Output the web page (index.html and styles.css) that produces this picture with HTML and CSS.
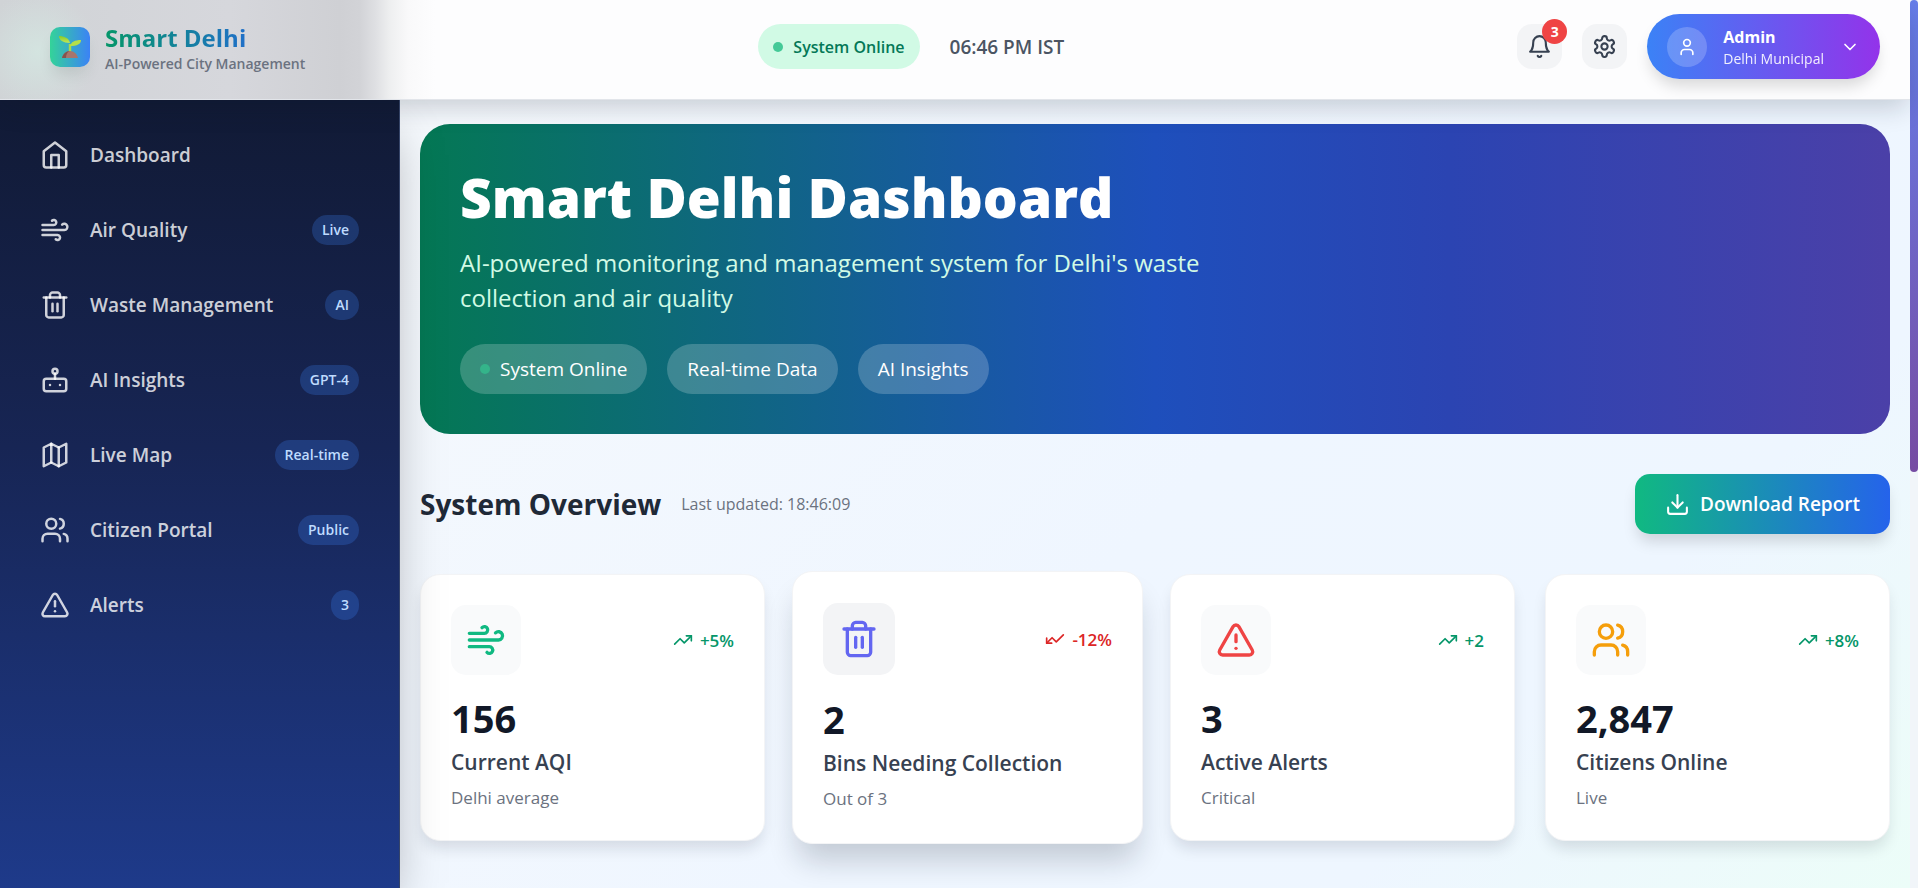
FILE: index.html
```html
<!DOCTYPE html>
<html lang="en">
<head>
    <meta charset="UTF-8">
    <meta name="viewport" content="width=device-width, initial-scale=1.0">
    <title>Smart Delhi Dashboard</title>
    <link rel="stylesheet" href="styles.css">
</head>
<body>
    <div class="app">
        <header class="topbar">
            <a href="#" class="brand">
                <span class="brand-icon">
                    <svg width="24" height="24" viewBox="0 0 24 24">
                        <defs>
                            <linearGradient id="leaf" x1="0" y1="0" x2="0" y2="1">
                                <stop offset="0" stop-color="#8bc926"/>
                                <stop offset="1" stop-color="#c0e85a"/>
                            </linearGradient>
                        </defs>
                        <path d="M12 17V9" stroke="#a9d94a" stroke-width="2.4" fill="none"/>
                        <path d="M12 8C11 3 6 1 1 1c0 4 4 7 11 7z" fill="url(#leaf)"/>
                        <path d="M12 11c1-4 5-6 11-6 0 4-4 6-11 6z" fill="#b4e04a"/>
                        <path d="M4 23c1-4 4-7 8-7s7 3 8 7z" fill="#a8756c"/>
                        <path d="M4 23c1-4 4-7 8-7-3 1-4 4-4 7z" fill="#84544d"/>
                    </svg>
                </span>
                <span class="brand-text">
                    <span class="brand-name">Smart Delhi</span>
                    <span class="brand-tag">AI-Powered City Management</span>
                </span>
            </a>
            <div class="status">
                <span class="status-pill"><span class="dot"></span>System Online</span>
                <time class="clock">06:46 PM IST</time>
            </div>
            <div class="actions">
                <button class="icon-btn" type="button" aria-label="Notifications">
                    <svg class="icon" width="25" height="25" viewBox="0 0 24 24"><path d="M6 8a6 6 0 0 1 12 0c0 7 3 9 3 9H3s3-2 3-9"/><path d="M10.3 21a1.94 1.94 0 0 0 3.4 0"/></svg>
                    <span class="count">3</span>
                </button>
                <button class="icon-btn" type="button" aria-label="Settings">
                    <svg class="icon" width="25" height="25" viewBox="0 0 24 24"><path d="M12.22 2h-.44a2 2 0 0 0-2 2v.18a2 2 0 0 1-1 1.73l-.43.25a2 2 0 0 1-2 0l-.15-.08a2 2 0 0 0-2.73.73l-.22.38a2 2 0 0 0 .73 2.73l.15.1a2 2 0 0 1 1 1.72v.51a2 2 0 0 1-1 1.74l-.15.09a2 2 0 0 0-.73 2.73l.22.38a2 2 0 0 0 2.73.73l.15-.08a2 2 0 0 1 2 0l.43.25a2 2 0 0 1 1 1.73V20a2 2 0 0 0 2 2h.44a2 2 0 0 0 2-2v-.18a2 2 0 0 1 1-1.73l.43-.25a2 2 0 0 1 2 0l.15.08a2 2 0 0 0 2.73-.73l.22-.39a2 2 0 0 0-.73-2.73l-.15-.08a2 2 0 0 1-1-1.74v-.5a2 2 0 0 1 1-1.74l.15-.09a2 2 0 0 0 .73-2.73l-.22-.38a2 2 0 0 0-2.73-.73l-.15.08a2 2 0 0 1-2 0l-.43-.25a2 2 0 0 1-1-1.73V4a2 2 0 0 0-2-2z"/><circle cx="12" cy="12" r="3"/></svg>
                </button>
                <button class="profile" type="button">
                    <span class="avatar">
                        <svg class="icon" width="20" height="20" viewBox="0 0 24 24"><path d="M19 21v-2a4 4 0 0 0-4-4H9a4 4 0 0 0-4 4v2"/><circle cx="12" cy="7" r="4"/></svg>
                    </span>
                    <span class="profile-text">
                        <span class="profile-name">Admin</span>
                        <span class="profile-org">Delhi Municipal</span>
                    </span>
                    <svg class="icon" width="20" height="20" viewBox="0 0 24 24"><path d="m6 9 6 6 6-6"/></svg>
                </button>
            </div>
        </header>

        <div class="layout">
            <nav class="sidebar">
                <a href="#" class="nav-link">
                    <svg class="icon" width="30" height="30" viewBox="0 0 24 24"><path d="m3 9 9-7 9 7v11a2 2 0 0 1-2 2H5a2 2 0 0 1-2-2z"/><path d="M9 22V12h6v10"/></svg>
                    <span class="nav-label">Dashboard</span>
                </a>
                <a href="#" class="nav-link">
                    <svg class="icon" width="30" height="30" viewBox="0 0 24 24"><path d="M17.7 7.7a2.5 2.5 0 1 1 1.8 4.3H2"/><path d="M9.6 4.6A2 2 0 1 1 11 8H2"/><path d="M12.6 19.4A2 2 0 1 0 14 16H2"/></svg>
                    <span class="nav-label">Air Quality</span>
                    <span class="tag">Live</span>
                </a>
                <a href="#" class="nav-link">
                    <svg class="icon" width="30" height="30" viewBox="0 0 24 24"><path d="M3 6h18"/><path d="M19 6v14c0 1-1 2-2 2H7c-1 0-2-1-2-2V6"/><path d="M8 6V4c0-1 1-2 2-2h4c1 0 2 1 2 2v2"/><path d="M10 11v6"/><path d="M14 11v6"/></svg>
                    <span class="nav-label">Waste Management</span>
                    <span class="tag">AI</span>
                </a>
                <a href="#" class="nav-link">
                    <svg class="icon" width="30" height="30" viewBox="0 0 24 24"><rect x="3" y="11" width="18" height="10" rx="2"/><circle cx="12" cy="5" r="2"/><path d="M12 7v4"/><path d="M8 16h.01"/><path d="M16 16h.01"/></svg>
                    <span class="nav-label">AI Insights</span>
                    <span class="tag">GPT-4</span>
                </a>
                <a href="#" class="nav-link">
                    <svg class="icon" width="30" height="30" viewBox="0 0 24 24"><path d="m3 6 6-3 6 3 6-3v15l-6 3-6-3-6 3z"/><path d="M9 3v15"/><path d="M15 6v15"/></svg>
                    <span class="nav-label">Live Map</span>
                    <span class="tag">Real-time</span>
                </a>
                <a href="#" class="nav-link">
                    <svg class="icon" width="30" height="30" viewBox="0 0 24 24"><path d="M16 21v-2a4 4 0 0 0-4-4H6a4 4 0 0 0-4 4v2"/><circle cx="9" cy="7" r="4"/><path d="M22 21v-2a4 4 0 0 0-3-3.87"/><path d="M16 3.13a4 4 0 0 1 0 7.75"/></svg>
                    <span class="nav-label">Citizen Portal</span>
                    <span class="tag">Public</span>
                </a>
                <a href="#" class="nav-link">
                    <svg class="icon" width="30" height="30" viewBox="0 0 24 24"><path d="m21.73 18-8-14a2 2 0 0 0-3.48 0l-8 14A2 2 0 0 0 4 21h16a2 2 0 0 0 1.73-3Z"/><path d="M12 9v4"/><path d="M12 17h.01"/></svg>
                    <span class="nav-label">Alerts</span>
                    <span class="tag">3</span>
                </a>
            </nav>

            <main class="content">
                <section class="hero">
                    <h1>Smart Delhi Dashboard</h1>
                    <p>AI-powered monitoring and management system for Delhi's waste collection and air quality</p>
                    <div class="chips">
                        <span class="chip"><span class="dot"></span>System Online</span>
                        <span class="chip">Real-time Data</span>
                        <span class="chip">AI Insights</span>
                    </div>
                </section>

                <section class="overview">
                    <div class="overview-head">
                        <h2>System Overview</h2>
                        <span class="updated">Last updated: 18:46:09</span>
                        <button class="download" type="button">
                            <svg class="icon" width="25" height="25" viewBox="0 0 24 24"><path d="M21 15v4a2 2 0 0 1-2 2H5a2 2 0 0 1-2-2v-4"/><path d="m7 10 5 5 5-5"/><path d="M12 15V3"/></svg>
                            Download Report
                        </button>
                    </div>

                    <div class="cards">
                        <article class="card">
                            <div class="card-top">
                                <span class="card-icon green">
                                    <svg class="icon" width="40" height="40" viewBox="0 0 24 24"><path d="M17.7 7.7a2.5 2.5 0 1 1 1.8 4.3H2"/><path d="M9.6 4.6A2 2 0 1 1 11 8H2"/><path d="M12.6 19.4A2 2 0 1 0 14 16H2"/></svg>
                                </span>
                                <span class="trend up">
                                    <svg class="icon" width="20" height="20" viewBox="0 0 24 24"><path d="m22 7-8.5 8.5-5-5L2 17"/><path d="M16 7h6v6"/></svg>
                                    +5%
                                </span>
                            </div>
                            <div class="value">156</div>
                            <h3>Current AQI</h3>
                            <p>Delhi average</p>
                        </article>
                        <article class="card raised">
                            <div class="card-top">
                                <span class="card-icon indigo">
                                    <svg class="icon" width="40" height="40" viewBox="0 0 24 24"><path d="M3 6h18"/><path d="M19 6v14c0 1-1 2-2 2H7c-1 0-2-1-2-2V6"/><path d="M8 6V4c0-1 1-2 2-2h4c1 0 2 1 2 2v2"/><path d="M10 11v6"/><path d="M14 11v6"/></svg>
                                </span>
                                <span class="trend down">
                                    <svg class="icon" width="20" height="20" viewBox="0 0 24 24"><path d="m22 7-8.5 8.5-5-5L2 17"/><path d="M2 11v6h6"/></svg>
                                    -12%
                                </span>
                            </div>
                            <div class="value">2</div>
                            <h3>Bins Needing Collection</h3>
                            <p>Out of 3</p>
                        </article>
                        <article class="card">
                            <div class="card-top">
                                <span class="card-icon red">
                                    <svg class="icon" width="40" height="40" viewBox="0 0 24 24"><path d="m21.73 18-8-14a2 2 0 0 0-3.48 0l-8 14A2 2 0 0 0 4 21h16a2 2 0 0 0 1.73-3Z"/><path d="M12 9v4"/><path d="M12 17h.01"/></svg>
                                </span>
                                <span class="trend up">
                                    <svg class="icon" width="20" height="20" viewBox="0 0 24 24"><path d="m22 7-8.5 8.5-5-5L2 17"/><path d="M16 7h6v6"/></svg>
                                    +2
                                </span>
                            </div>
                            <div class="value">3</div>
                            <h3>Active Alerts</h3>
                            <p>Critical</p>
                        </article>
                        <article class="card">
                            <div class="card-top">
                                <span class="card-icon amber">
                                    <svg class="icon" width="40" height="40" viewBox="0 0 24 24"><path d="M16 21v-2a4 4 0 0 0-4-4H6a4 4 0 0 0-4 4v2"/><circle cx="9" cy="7" r="4"/><path d="M22 21v-2a4 4 0 0 0-3-3.87"/><path d="M16 3.13a4 4 0 0 1 0 7.75"/></svg>
                                </span>
                                <span class="trend up">
                                    <svg class="icon" width="20" height="20" viewBox="0 0 24 24"><path d="m22 7-8.5 8.5-5-5L2 17"/><path d="M16 7h6v6"/></svg>
                                    +8%
                                </span>
                            </div>
                            <div class="value">2,847</div>
                            <h3>Citizens Online</h3>
                            <p>Live</p>
                        </article>
                    </div>
                </section>
            </main>
        </div>
    </div>
    <div class="scroll-track" aria-hidden="true"><div class="scroll-thumb"></div></div>
</body>
</html>
```

FILE: styles.css
```css
* {
    box-sizing: border-box;
}
body {
    margin: 0;
    display: flex;
    min-height: 100vh;
    font-family: 'Segoe UI', 'Open Sans', sans-serif;
    color: #111827;
}
h1, h2, h3, p {
    margin: 0;
}
a {
    color: inherit;
    text-decoration: none;
}
button {
    border: none;
    font-family: inherit;
    cursor: pointer;
}
.icon {
    flex: none;
    fill: none;
    stroke: currentColor;
    stroke-width: 2;
    stroke-linecap: round;
    stroke-linejoin: round;
}
.dot {
    width: 10px;
    height: 10px;
    border-radius: 50%;
    background: #44c997;
}
.app {
    flex: 1;
    display: flex;
    flex-direction: column;
    background: linear-gradient(135deg, #f8fafc, #eff6ff 60%, #eef6ff 80%, #ecfdf8);
}

/* top bar */
.topbar {
    position: relative;
    z-index: 2;
    display: flex;
    justify-content: space-between;
    align-items: center;
    height: 100px;
    padding: 0 30px 6px 50px;
    border-bottom: 1px solid #e2e5ea;
    background:
        radial-gradient(circle at 38px 52px, rgba(212, 232, 226, 0.8), rgba(212, 232, 226, 0) 60px),
        linear-gradient(90deg, #d0d3d6, #d6d7dc 230px, #cfd0d4 340px, #d2d3d7 360px, #dfe0e3 376px, #eeeff0 390px, #f9f9fa 408px, #fdfdfe 435px);
    box-shadow: 0 10px 25px -3px rgba(15, 23, 42, 0.2);
}
.brand {
    display: flex;
    align-items: center;
    gap: 15px;
}
.brand-icon {
    display: flex;
    align-items: center;
    justify-content: center;
    width: 40px;
    height: 40px;
    border-radius: 10px;
    background: linear-gradient(90deg, #34d399, #3b82f6);
    box-shadow: 0 10px 15px -3px rgba(0, 0, 0, 0.1);
}
.brand-text {
    display: flex;
    flex-direction: column;
    padding-top: 2px;
}
.brand-name {
    align-self: flex-start;
    font-size: 24px;
    line-height: 32px;
    font-weight: 700;
    background: linear-gradient(90deg, #059669, #2070c8);
    background-clip: text;
    -webkit-background-clip: text;
    color: transparent;
}
.brand-tag {
    font-size: 14px;
    line-height: 20px;
    font-weight: 600;
    color: #6b7280;
}
.status {
    display: flex;
    align-items: center;
    gap: 30px;
}
.status-pill {
    display: flex;
    align-items: center;
    gap: 10px;
    height: 45px;
    padding: 0 15px;
    border-radius: 23px;
    background: #d1fae5;
    color: #047857;
    font-size: 16px;
    font-weight: 600;
}
.clock {
    font-size: 19px;
    font-weight: 600;
    color: #4b5563;
}
.actions {
    display: flex;
    align-items: center;
    gap: 20px;
}
.icon-btn {
    position: relative;
    display: flex;
    align-items: center;
    justify-content: center;
    width: 45px;
    height: 45px;
    padding: 0;
    border-radius: 15px;
    background: #f3f4f6;
    color: #374151;
}
.count {
    position: absolute;
    top: -5px;
    right: -5px;
    width: 25px;
    border-radius: 50%;
    background: #ef4444;
    color: #fff;
    font-size: 14px;
    line-height: 25px;
    font-weight: 700;
}
.profile {
    display: flex;
    align-items: center;
    gap: 16px;
    height: 65px;
    padding: 0 20px;
    border-radius: 33px;
    background: linear-gradient(90deg, #3b82f6, #9333ea);
    box-shadow: 0 10px 15px -3px rgba(0, 0, 0, 0.15);
    color: #fff;
}
.avatar {
    display: flex;
    align-items: center;
    justify-content: center;
    width: 40px;
    height: 40px;
    border-radius: 50%;
    background: rgba(255, 255, 255, 0.2);
}
.profile-text {
    display: flex;
    flex-direction: column;
    text-align: left;
}
.profile-name {
    font-size: 16px;
    line-height: 24px;
    font-weight: 700;
}
.profile-org {
    font-size: 14px;
    line-height: 20px;
    opacity: 0.9;
}

.layout {
    flex: 1;
    display: flex;
}

/* sidebar */
.sidebar {
    position: relative;
    z-index: 1;
    flex: none;
    display: flex;
    flex-direction: column;
    gap: 15px;
    width: 400px;
    padding: 25px 20px;
    border-right: 1px solid #364569;
    background: linear-gradient(180deg, #111a35, #172554 44%, #1e3a8a);
    box-shadow: 0 25px 50px -12px rgba(0, 0, 0, 0.35);
}
.nav-link {
    display: flex;
    align-items: center;
    gap: 20px;
    height: 60px;
    padding: 0 20px;
    color: rgba(255, 255, 255, 0.8);
}
.nav-label {
    flex: 1;
    font-size: 19px;
    font-weight: 600;
}
.tag {
    padding: 0 10px;
    border-radius: 15px;
    background: rgba(59, 130, 246, 0.25);
    color: #bfdbfe;
    font-size: 14px;
    line-height: 30px;
    font-weight: 600;
}

/* main area */
.content {
    flex: 1;
    padding: 24px 20px 46px;
}
.hero {
    padding: 40px;
    border-radius: 30px;
    background: linear-gradient(90deg, #047854, #1e4fbc 50%, #2b44b2 70%, #4b40a8);
    color: #fff;
}
.hero h1 {
    margin-bottom: 15px;
    font-size: 55px;
    line-height: 66px;
    font-weight: 800;
}
.hero p {
    max-width: 800px;
    margin-bottom: 29px;
    font-size: 24px;
    line-height: 35px;
    color: #d1fae5;
}
.chips {
    display: flex;
    gap: 20px;
}
.chip {
    display: flex;
    align-items: center;
    gap: 10px;
    height: 50px;
    padding: 0 20px;
    border-radius: 25px;
    background: rgba(255, 255, 255, 0.2);
    font-size: 19px;
}
.chip .dot {
    background: #34b48a;
}
.overview-head {
    display: flex;
    align-items: center;
    gap: 20px;
    margin: 40px 0;
}
.overview-head h2 {
    font-size: 28px;
    line-height: 40px;
    font-weight: 700;
    color: #1f2937;
}
.updated {
    font-size: 16px;
    color: #6b7280;
}
.download {
    display: flex;
    align-items: center;
    gap: 10px;
    height: 60px;
    margin-left: auto;
    padding: 0 30px;
    border-radius: 15px;
    background: linear-gradient(90deg, #10b981, #2563eb);
    box-shadow: 0 10px 15px -3px rgba(0, 0, 0, 0.15);
    color: #fff;
    font-size: 19px;
    font-weight: 600;
}
.cards {
    display: grid;
    grid-template-columns: repeat(4, 1fr);
    gap: 30px;
}
.card {
    padding: 30px;
    border: 1px solid #f3f4f6;
    border-radius: 20px;
    background: #fff;
    box-shadow: 0 10px 15px -3px rgba(15, 23, 42, 0.13);
}
.card-top {
    display: flex;
    justify-content: space-between;
    align-items: center;
    margin-bottom: 20px;
}
.card-icon {
    display: flex;
    padding: 15px;
    border-radius: 15px;
    background: #f9fafb;
}
.green {
    color: #10b981;
}
.indigo {
    color: #6366f1;
}
.red {
    color: #ef4444;
}
.amber {
    color: #f59e0b;
}
.trend {
    display: flex;
    align-items: center;
    gap: 7px;
    font-size: 17px;
    font-weight: 600;
}
.up {
    color: #059669;
}
.down {
    color: #dc2626;
}
.value {
    margin-bottom: 3px;
    font-size: 38px;
    line-height: 47px;
    font-weight: 700;
}
.card h3 {
    margin-bottom: 5px;
    font-size: 21px;
    line-height: 35px;
    font-weight: 600;
    color: #374151;
}
.card p {
    font-size: 17px;
    line-height: 25px;
    color: #6b7280;
}

/* highlighted card, slightly larger than its neighbours */
.card.raised {
    margin: -3px;
    padding: 31px 30px;
    box-shadow: 0 22px 30px -6px rgba(15, 23, 42, 0.2);
}
.raised .card-top {
    margin-bottom: 21px;
}
.raised .card-icon {
    padding: 16px;
    background: #f3f4f6;
}

/* page scroll indicator */
.scroll-track {
    flex: none;
    width: 8px;
    background: #f1f5f9;
}
.scroll-thumb {
    height: 472px;
    border-radius: 4px;
    background: linear-gradient(180deg, #667eea, #764ba2);
}
```
